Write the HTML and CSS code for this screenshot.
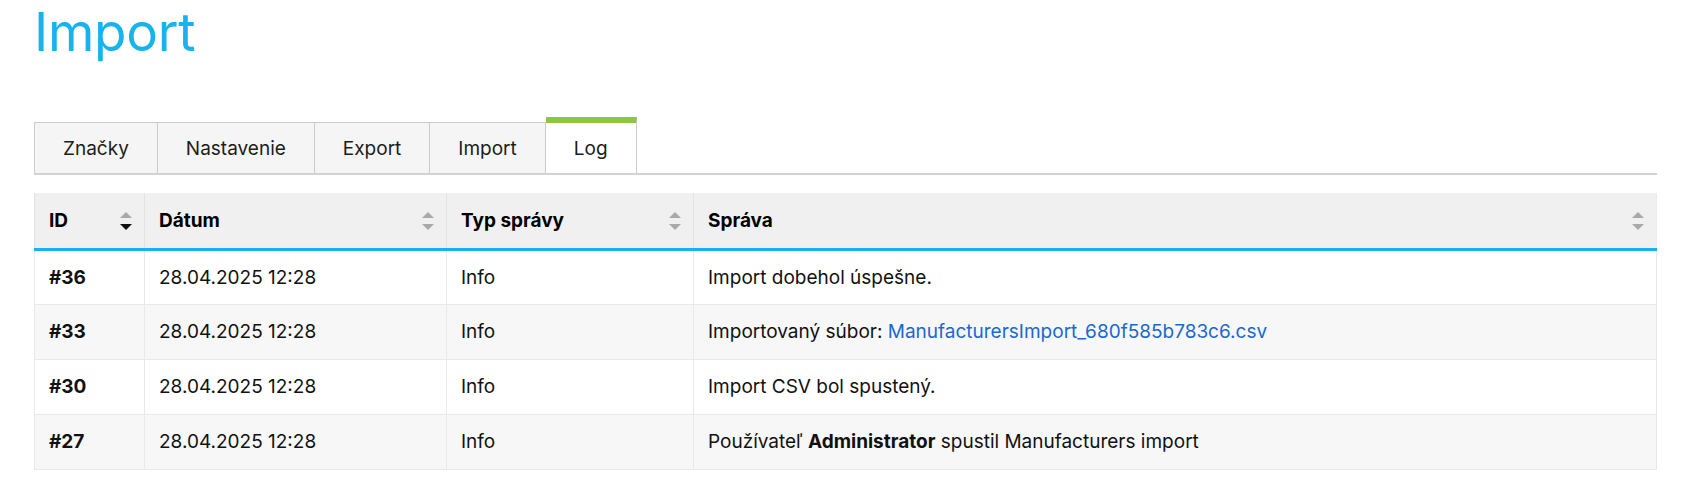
FILE: index.html
```html
<!DOCTYPE html>
<html lang="sk">
  <head>
    <meta charset="UTF-8" />
    <meta name="viewport" content="width=device-width, initial-scale=1.0" />
    <title>Import</title>
    <link rel="stylesheet" href="styles.css">
  </head>
  <body>
    <main class="page">
      <h1 class="page__title">Import</h1>

      <nav class="tabs">
        <a class="tabs__item" href="#">Značky</a>
        <a class="tabs__item" href="#">Nastavenie</a>
        <a class="tabs__item" href="#">Export</a>
        <a class="tabs__item" href="#">Import</a>
        <a class="tabs__item tabs__item--active" href="#">Log</a>
      </nav>

      <table class="log">
        <colgroup>
          <col class="log__col-id" />
          <col class="log__col-date" />
          <col class="log__col-type" />
          <col />
        </colgroup>
        <thead>
          <tr>
            <th>
              <div class="log__head">ID
                <svg class="sort sort--desc" viewBox="0 0 12 18" width="12" height="18"><polygon class="sort__up" points="0,6 6,0 12,6" /><polygon class="sort__down" points="0,12 12,12 6,18" /></svg>
              </div>
            </th>
            <th>
              <div class="log__head">Dátum
                <svg class="sort" viewBox="0 0 12 18" width="12" height="18"><polygon class="sort__up" points="0,6 6,0 12,6" /><polygon class="sort__down" points="0,12 12,12 6,18" /></svg>
              </div>
            </th>
            <th>
              <div class="log__head">Typ správy
                <svg class="sort" viewBox="0 0 12 18" width="12" height="18"><polygon class="sort__up" points="0,6 6,0 12,6" /><polygon class="sort__down" points="0,12 12,12 6,18" /></svg>
              </div>
            </th>
            <th>
              <div class="log__head">Správa
                <svg class="sort" viewBox="0 0 12 18" width="12" height="18"><polygon class="sort__up" points="0,6 6,0 12,6" /><polygon class="sort__down" points="0,12 12,12 6,18" /></svg>
              </div>
            </th>
          </tr>
        </thead>
        <tbody>
          <tr>
            <td class="log__id">#36</td>
            <td>28.04.2025 12:28</td>
            <td>Info</td>
            <td>Import dobehol úspešne.</td>
          </tr>
          <tr>
            <td class="log__id">#33</td>
            <td>28.04.2025 12:28</td>
            <td>Info</td>
            <td>Importovaný súbor: <a class="log__link" href="#">ManufacturersImport_680f585b783c6.csv</a></td>
          </tr>
          <tr>
            <td class="log__id">#30</td>
            <td>28.04.2025 12:28</td>
            <td>Info</td>
            <td>Import CSV bol spustený.</td>
          </tr>
          <tr>
            <td class="log__id">#27</td>
            <td>28.04.2025 12:28</td>
            <td>Info</td>
            <td>Používateľ <strong>Administrator</strong> spustil Manufacturers import</td>
          </tr>
        </tbody>
      </table>
    </main>
  </body>
</html>
```

FILE: styles.css
```css
* {
  margin: 0;
  padding: 0;
  box-sizing: border-box;
}

body {
  font-family: Inter, "Noto Sans", sans-serif;
  font-size: 19px;
  color: #111;
  background-color: #fff;
}

.page {
  padding: 0 34px;
}

.page__title {
  font-size: 53px;
  font-weight: 400;
  line-height: 64px;
  letter-spacing: -0.3px;
  color: #17b3ef;
}

/* tabs */
.tabs {
  display: flex;
  align-items: flex-end;
  margin-top: 53px;
  border-bottom: 2px solid #d2d2d2;
}

.tabs__item {
  display: flex;
  align-items: center;
  height: 51px;
  padding: 0 28px;
  border: 1px solid #cbcbcb;
  border-bottom: none;
  border-left: none;
  background-color: #f5f5f5;
  color: #1c1c1c;
  text-decoration: none;
}

.tabs__item:first-child {
  border-left: 1px solid #cbcbcb;
}

.tabs__item--active {
  height: 56px;
  border-top: 6px solid #8dc63f;
  background-color: #fff;
}

/* log table */
.log {
  width: 100%;
  margin-top: 18px;
  border-collapse: collapse;
  border: 1px solid #ececec;
  border-top: none;
}

.log__col-id {
  width: 110px;
}

.log__col-date {
  width: 302px;
}

.log__col-type {
  width: 247px;
}

.log th {
  background-color: #f0f0f0;
  border-left: 1px solid #e3e3e3;
  border-bottom: 3px solid #17b3ef;
  font-weight: 700;
  text-align: left;
  color: #000;
  padding: 0 12px 0 14px;
  height: 56px;
}

.log__head {
  display: flex;
  align-items: center;
  justify-content: space-between;
  padding-top: 1px;
}

.sort__up,
.sort__down {
  fill: #a9a9a9;
}

.sort--desc .sort__down {
  fill: #111;
}

.log td {
  padding: 0 14px;
  height: 55px;
  border: 1px solid #e9e9e9;
  border-top: none;
}

.log tbody tr:nth-child(even) {
  background-color: #f7f7f7;
}

.log__id {
  font-weight: 700;
}

.log__link {
  color: #1b68cf;
  text-decoration: none;
}

.log strong {
  font-weight: 700;
}
```
